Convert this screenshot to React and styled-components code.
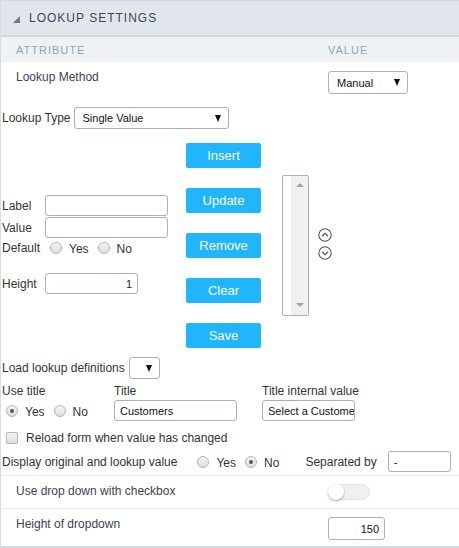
import React from "react";
import styled, { createGlobalStyle } from "styled-components";

const Global = createGlobalStyle`
  html, body { margin: 0; padding: 0; background: #fff; }
  body { font-family: "Liberation Sans", Arial, sans-serif; font-size: 12px; color: #333; }
  * { box-sizing: border-box; }
`;

const Panel = styled.div`
  width: 459px;
  height: 548px;
  border-left: 1px solid #d6dde3;
  border-bottom: 2px solid #d3dae0;
  display: flex;
  flex-direction: column;
  overflow: hidden;
`;

const Header = styled.div`
  height: 37px;
  border-top: 1px solid #d2dae0;
  border-bottom: 2px solid #cfd8de;
  background: #e0e6ec;
  display: flex;
  align-items: center;
  padding-left: 12px;
  gap: 9px;
  font-size: 12px;
  letter-spacing: 1px;
  color: #3c4654;
  text-transform: uppercase;
`;

const ColHead = styled.div`
  height: 25px;
  background: #eef2f5;
  display: grid;
  grid-template-columns: 312px 1fr;
  align-items: center;
  padding-left: 15px;
  font-size: 11px;
  letter-spacing: 1px;
  color: #8da6b6;
  text-transform: uppercase;
`;

const AttrRow = styled.div`
  height: ${(p) => p.$h}px;
  display: grid;
  grid-template-columns: 312px 1fr;
  align-items: start;
  padding: ${(p) => p.$pt}px 0 0 15px;
  border-top: ${(p) => (p.$line ? "1px solid #e6eaee" : "none")};
  color: #3d4254;
`;

const AttrLabel = styled.div`
  line-height: 14px;
  margin-top: ${(p) => p.$mt || 0}px;
`;

const Config = styled.div`
  padding: 7px 0 0 1px;
  display: flex;
  flex-direction: column;
  height: 375px;
`;

const Inline = styled.div`
  display: flex;
  align-items: center;
  gap: ${(p) => p.$gap || 0}px;
  margin-top: ${(p) => p.$mt || 0}px;
  height: ${(p) => (p.$h ? p.$h + "px" : "auto")};
`;

const SelectBox = styled.div`
  width: ${(p) => p.$w}px;
  height: ${(p) => p.$h || 22}px;
  border: 1px solid #a9b0b8;
  border-radius: 3px;
  background: #fff;
  display: flex;
  align-items: center;
  justify-content: space-between;
  padding: 0 7px 0 8px;
  font-size: 11px;
  color: #111;
  margin-top: ${(p) => p.$mt || 0}px;
`;

const Arrow = styled.span`
  width: 0;
  height: 0;
  border-left: 3.5px solid transparent;
  border-right: 3.5px solid transparent;
  border-top: 7px solid #111;
  margin-left: auto;
`;

const Middle = styled.div`
  display: flex;
  margin-top: 14px;
`;

const LeftCol = styled.div`
  width: 184px;
  padding-top: 52px;
  display: flex;
  flex-direction: column;
`;

const FieldLabel = styled.span`
  width: 43px;
  flex: none;
`;

const TextInput = styled.div`
  width: ${(p) => p.$w}px;
  height: ${(p) => p.$h || 21}px;
  border: 1px solid #a9b0b8;
  border-radius: 3px;
  background: #fff;
  font-size: 11px;
  color: ${(p) => p.$color || "#111"};
  display: flex;
  align-items: center;
  justify-content: ${(p) => (p.$right ? "flex-end" : "flex-start")};
  padding: 0 5px;
  margin-left: ${(p) => p.$ml || 0}px;
  white-space: nowrap;
  overflow: hidden;
`;

const ButtonCol = styled.div`
  display: flex;
  flex-direction: column;
  gap: 20px;
`;

const Btn = styled.div`
  width: 75px;
  height: 25px;
  border-radius: 2px;
  background: #21b5fe;
  color: #fff;
  font-size: 13px;
  display: flex;
  align-items: center;
  justify-content: center;
`;

const ListWrap = styled.div`
  display: flex;
  align-items: center;
  margin: 32px 0 0 21px;
  height: 141px;
`;

const ListBox = styled.div`
  width: 27px;
  height: 141px;
  border: 1px solid #a9b0b8;
  border-radius: 2px;
  background: #fff;
  display: flex;
  justify-content: flex-end;
  overflow: hidden;
`;

const ScrollBar = styled.div`
  width: 17px;
  background: #f0f0f0;
  display: flex;
  flex-direction: column;
  justify-content: space-between;
  align-items: center;
  padding: 7px 0 8px;
`;

const ScrollTri = styled.span`
  width: 0;
  height: 0;
  border-left: 4px solid transparent;
  border-right: 4px solid transparent;
  ${(p) => (p.$up ? "border-bottom: 4px solid #a3a3a3;" : "border-top: 4px solid #a3a3a3;")}
`;

const Arrows = styled.div`
  margin-left: 9px;
  display: flex;
  flex-direction: column;
  gap: 4px;
  margin-top: -3px;
`;

const RadioGroup = styled.div`
  display: flex;
  align-items: center;
  margin-left: ${(p) => p.$ml || 0}px;
`;

const Radio = styled.span`
  width: 12px;
  height: 12px;
  border-radius: 50%;
  border: 1px solid #b3b3b3;
  background: linear-gradient(#f4f4f4, #dedede);
  display: inline-flex;
  align-items: center;
  justify-content: center;
  flex: none;
  &::after {
    content: "";
    width: 4px;
    height: 4px;
    border-radius: 50%;
    background: ${(p) => (p.$on ? "#555" : "transparent")};
  }
`;

const RadioText = styled.span`
  margin: 2px ${(p) => p.$mr || 9}px 0 7px;
`;

const TitleGrid = styled.div`
  display: grid;
  grid-template-columns: 112px 148px 1fr;
  margin-top: 5px;
`;

const TitleCell = styled.div`
  display: flex;
  flex-direction: column;
  gap: ${(p) => p.$gap}px;
`;

const CheckRow = styled.div`
  display: flex;
  align-items: center;
  margin: 10px 0 0 4px;
  gap: 8px;
  height: 14px;
`;

const Check = styled.span`
  width: 12px;
  height: 12px;
  border: 1px solid #b3b3b3;
  border-radius: 2px;
  background: linear-gradient(#f4f4f4, #dedede);
`;

const Toggle = styled.div`
  width: 42px;
  height: 16px;
  border-radius: 8px;
  background: #eef0f2;
  border: 1px solid #dfe3e7;
  position: relative;
  margin-top: ${(p) => p.$mt || 0}px;
  &::before {
    content: "";
    position: absolute;
    left: -1px;
    top: -1px;
    width: 16px;
    height: 16px;
    border-radius: 50%;
    background: #fff;
    box-shadow: 0 1px 2px rgba(0, 0, 0, 0.35);
  }
`;

const Caret = () => (
  <svg width="7" height="7" viewBox="0 0 7 7" style={{ marginTop: 3 }}>
    <polygon points="7,0 7,7 0,7" fill="#6e7a87" />
  </svg>
);

const CircleChevron = ({ up }) => (
  <svg width="14" height="14" viewBox="0 0 14 14">
    <circle cx="7" cy="7" r="6.2" fill="none" stroke="#555" strokeWidth="1.1" />
    <polyline
      points={up ? "4,8.3 7,5.3 10,8.3" : "4,5.7 7,8.7 10,5.7"}
      fill="none"
      stroke="#555"
      strokeWidth="1.3"
    />
  </svg>
);

const RadioPair = ({ value, ml, lastMr }) => (
  <RadioGroup $ml={ml}>
    <Radio $on={value === "yes"} />
    <RadioText>Yes</RadioText>
    <Radio $on={value === "no"} />
    <RadioText $mr={lastMr || 0}>No</RadioText>
  </RadioGroup>
);

export default function App() {
  return (
    <>
      <Global />
      <Panel>
        <Header>
          <Caret />
          <span>Lookup Settings</span>
        </Header>
        <ColHead>
          <span>Attribute</span>
          <span>Value</span>
        </ColHead>
        <AttrRow $h={38} $pt={8}>
          <AttrLabel>Lookup Method</AttrLabel>
          <SelectBox $w={80} $h={23} $mt={1}>
            Manual
            <Arrow />
          </SelectBox>
        </AttrRow>
        <Config>
          <Inline $gap={3}>
            <span>Lookup Type</span>
            <SelectBox $w={155}>
              Single Value
              <Arrow />
            </SelectBox>
          </Inline>
          <Middle>
            <LeftCol>
              <Inline>
                <FieldLabel>Label</FieldLabel>
                <TextInput $w={123} />
              </Inline>
              <Inline $mt={1}>
                <FieldLabel>Value</FieldLabel>
                <TextInput $w={123} />
              </Inline>
              <Inline $h={20}>
                <FieldLabel>Default</FieldLabel>
                <RadioPair ml={5} />
              </Inline>
              <Inline $mt={15}>
                <FieldLabel>Height</FieldLabel>
                <TextInput $w={93} $right $color="#3a1010">1</TextInput>
              </Inline>
            </LeftCol>
            <ButtonCol>
              <Btn>Insert</Btn>
              <Btn>Update</Btn>
              <Btn>Remove</Btn>
              <Btn>Clear</Btn>
              <Btn>Save</Btn>
            </ButtonCol>
            <ListWrap>
              <ListBox>
                <ScrollBar>
                  <ScrollTri $up />
                  <ScrollTri />
                </ScrollBar>
              </ListBox>
              <Arrows>
                <CircleChevron up />
                <CircleChevron />
              </Arrows>
            </ListWrap>
          </Middle>
          <Inline $gap={4} $mt={9}>
            <span>Load lookup definitions</span>
            <SelectBox $w={31}>
              <Arrow />
            </SelectBox>
          </Inline>
          <TitleGrid>
            <TitleCell $gap={5}>
              <span>Use title</span>
              <RadioPair value="yes" ml={4} />
            </TitleCell>
            <TitleCell $gap={2}>
              <span>Title</span>
              <TextInput $w={123}>Customers</TextInput>
            </TitleCell>
            <TitleCell $gap={2}>
              <span>Title internal value</span>
              <TextInput $w={93}>Select a Custome</TextInput>
            </TitleCell>
          </TitleGrid>
          <CheckRow>
            <Check />
            <span>Reload form when value has changed</span>
          </CheckRow>
          <Inline $mt={6}>
            <span>Display original and lookup value</span>
            <RadioPair value="no" ml={20} lastMr={26} />
            <span>Separated by</span>
            <TextInput $w={63} $ml={11}>-</TextInput>
          </Inline>
        </Config>
        <AttrRow $h={33} $pt={8} $line>
          <AttrLabel>Use drop down with checkbox</AttrLabel>
          <Toggle />
        </AttrRow>
        <AttrRow $h={37} $pt={8} $line>
          <AttrLabel>Height of dropdown</AttrLabel>
          <TextInput $w={57} $h={23} $right>150</TextInput>
        </AttrRow>
      </Panel>
    </>
  );
}
